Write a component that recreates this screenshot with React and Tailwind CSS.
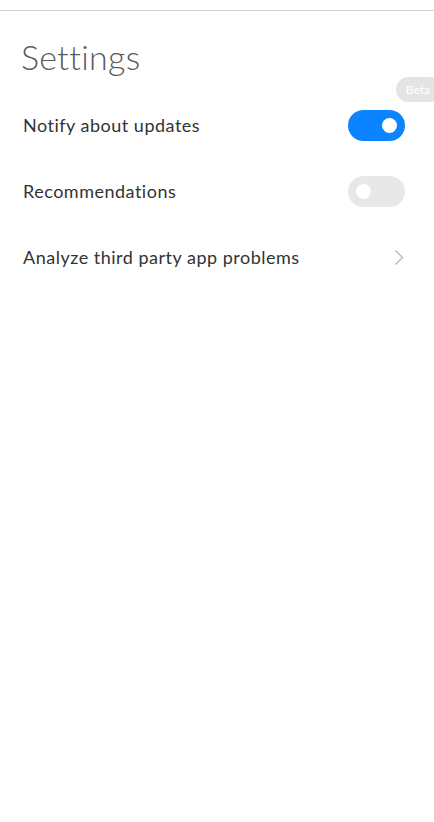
import React, { useState } from "react";

const Toggle = ({ on, onClick }) => (
  <button
    onClick={onClick}
    className={`flex h-[31px] w-[57px] items-center rounded-full px-[8px] ${
      on ? "justify-end bg-[#0d84ff]" : "justify-start bg-[#e8e8e8]"
    }`}
  >
    <span className="block h-[15px] w-[15px] rounded-full bg-white" />
  </button>
);

const App = () => {
  const [notify, setNotify] = useState(true);
  const [recs, setRecs] = useState(false);

  return (
    <div
      className="min-h-screen bg-white"
      style={{ fontFamily: "'Lato', 'Noto Sans', sans-serif" }}
    >
      {/* top divider */}
      <div className="h-[10px]" />
      <div className="h-px bg-[#d4d4d4]" />

      {/* title */}
      <div className="relative h-[81px]">
        <h1 className="pl-[21px] pt-[26px] text-[34px] font-light leading-[40px] tracking-[0.3px] text-[#5a5a5a]">
          Settings
        </h1>
        <span className="absolute bottom-[-10px] right-[-8px] flex h-[25px] items-center rounded-full bg-[#e4e4e4] pl-[10px] pr-[12px] text-[12px] text-white">
          Beta
        </span>
      </div>

      {/* rows */}
      <div className="flex h-[66px] items-center justify-between pl-[23px] pr-[29px]">
        <span className="text-[18px] tracking-[0.5px] text-[#333]">Notify about updates</span>
        <Toggle on={notify} onClick={() => setNotify(!notify)} />
      </div>
      <div className="flex h-[66px] items-center justify-between pl-[23px] pr-[29px]">
        <span className="text-[18px] tracking-[0.5px] text-[#333]">Recommendations</span>
        <Toggle on={recs} onClick={() => setRecs(!recs)} />
      </div>
      <div className="flex h-[67px] items-center justify-between pl-[23px] pr-[30px]">
        <span className="text-[18px] tracking-[0.5px] text-[#333]">Analyze third party app problems</span>
        <svg width="10" height="17" viewBox="0 0 10 17" fill="none">
          <path d="M1.5 1.5 L8.5 8.5 L1.5 15.5" stroke="#b4b4b4" strokeWidth="1.3" />
        </svg>
      </div>
    </div>
  );
};

export default App;
